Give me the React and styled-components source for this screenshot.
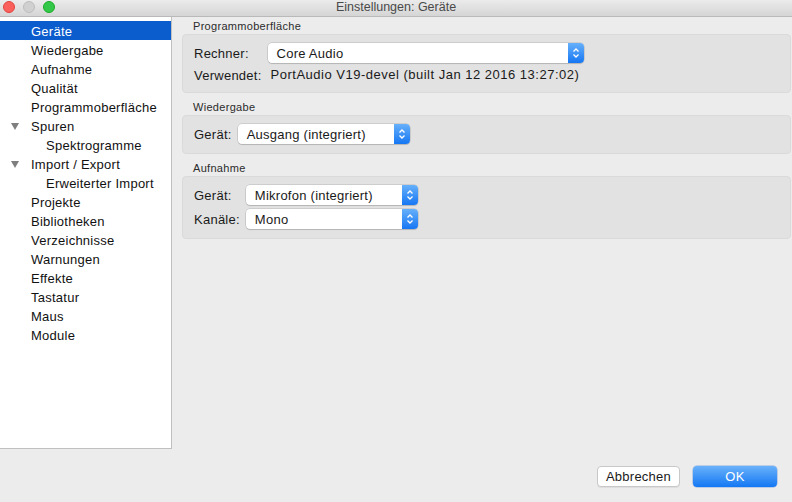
import styled, { createGlobalStyle } from "styled-components";

const GlobalStyle = createGlobalStyle`
  html, body {
    margin: 0;
    padding: 0;
    background: #ececec;
    overflow: hidden;
  }
  * {
    box-sizing: border-box;
  }
`;

const Window = styled.div`
  width: 792px;
  height: 502px;
  display: flex;
  flex-direction: column;
  background: #ececec;
  font-family: "Liberation Sans", Helvetica, Arial, sans-serif;
  font-size: 13px;
  letter-spacing: 0.25px;
  color: #1a1a1a;
`;

const TitleBar = styled.div`
  position: relative;
  height: 17px;
  flex-shrink: 0;
  display: flex;
  align-items: center;
  justify-content: center;
  background: linear-gradient(#ebebeb, #d5d5d5);
  border-bottom: 1px solid #b9b9b9;
`;

const Lights = styled.div`
  position: absolute;
  left: 3px;
  top: 1px;
  display: flex;
  gap: 8px;
`;

const Light = styled.span`
  width: 12px;
  height: 12px;
  border-radius: 50%;
  background: ${(p) => p.$color};
  border: 1px solid ${(p) => p.$edge};
`;

const Title = styled.div`
  font-size: 12.5px;
  letter-spacing: 0;
  color: #4a4a4a;
  margin-top: -2px;
`;

const Body = styled.div`
  height: 432px;
  flex-shrink: 0;
  display: flex;
`;

const Sidebar = styled.div`
  width: 172px;
  flex-shrink: 0;
  background: #fff;
  border-right: 1px solid #bfbfbf;
  border-bottom: 1px solid #bfbfbf;
  padding-top: 4px;
`;

const NavItem = styled.div`
  height: 19px;
  padding-top: 1px;
  display: flex;
  align-items: center;
  padding-left: ${(p) => (p.$child ? 46 : 31)}px;
  position: relative;
  background: ${(p) => (p.$selected ? "#0b5ccd" : "transparent")};
  color: ${(p) => (p.$selected ? "#fff" : "#111")};
`;

const Disclosure = styled.span`
  position: absolute;
  left: 11px;
  top: 7px;
  width: 0;
  height: 0;
  border-left: 4px solid transparent;
  border-right: 4px solid transparent;
  border-top: 7px solid #7f7f7f;
`;

const Main = styled.div`
  flex: 1;
  padding: 2px 1px 0 10px;
  display: flex;
  flex-direction: column;
`;

const GroupLabel = styled.div`
  height: 15px;
  line-height: 15px;
  font-size: 11px;
  letter-spacing: 0.3px;
  color: #2b2b2b;
  padding-left: 11px;
`;

const GroupBox = styled.div`
  background: #e2e2e2;
  border: 1px solid #dadada;
  border-radius: 4px;
  padding: 8px 11px 9px;
  margin-bottom: 7px;
  display: grid;
  grid-template-columns: auto 1fr;
  column-gap: 6px;
  row-gap: 4px;
  align-items: center;
`;

const FieldLabel = styled.div`
  white-space: nowrap;
`;

const InfoText = styled.div`
  height: 16px;
  line-height: 16px;
  padding-left: 3px;
  letter-spacing: 0.5px;
  white-space: nowrap;
`;

const SelectBox = styled.div`
  width: ${(p) => p.$width}px;
  height: 20px;
  display: flex;
  align-items: center;
  background: #fff;
  border-radius: 4px;
  box-shadow: 0 0 0 0.5px rgba(0, 0, 0, 0.18), 0 1px 1px rgba(0, 0, 0, 0.12);
  overflow: hidden;
`;

const SelectText = styled.span`
  flex: 1;
  padding-left: 9px;
  white-space: nowrap;
`;

const SelectArrow = styled.span`
  width: 16px;
  height: 100%;
  display: flex;
  align-items: center;
  justify-content: center;
  background: linear-gradient(#66b0fb, #1677f3);
`;

const Footer = styled.div`
  flex: 1;
  display: flex;
  justify-content: flex-end;
  align-items: flex-start;
  gap: 13px;
  padding: 17px 15px 0 0;
`;

const Button = styled.button`
  width: ${(p) => p.$width}px;
  height: 21px;
  border-radius: 4px;
  font-family: inherit;
  font-size: 13px;
  letter-spacing: 0.25px;
  padding: 0;
  border: ${(p) => (p.$primary ? "none" : "1px solid #c8c8c8")};
  background: ${(p) => (p.$primary ? "linear-gradient(#69b1fa, #1478f4)" : "#fff")};
  color: ${(p) => (p.$primary ? "#fff" : "#1a1a1a")};
  box-shadow: ${(p) => (p.$primary ? "0 0 0 0.5px rgba(0,80,200,0.4)" : "0 1px 0 rgba(0,0,0,0.06)")};
`;

const Chevrons = () => (
  <svg width="8" height="12" viewBox="0 0 8 12">
    <path d="M1.5 4.5 L4 2 L6.5 4.5 M1.5 7.5 L4 10 L6.5 7.5" fill="none" stroke="#fff" strokeWidth="1.3" />
  </svg>
);

const Select = ({ width, value }) => (
  <SelectBox $width={width}>
    <SelectText>{value}</SelectText>
    <SelectArrow>
      <Chevrons />
    </SelectArrow>
  </SelectBox>
);

const navItems = [
  { label: "Geräte", selected: true },
  { label: "Wiedergabe" },
  { label: "Aufnahme" },
  { label: "Qualität" },
  { label: "Programmoberfläche" },
  { label: "Spuren", open: true },
  { label: "Spektrogramme", child: true },
  { label: "Import / Export", open: true },
  { label: "Erweiterter Import", child: true },
  { label: "Projekte" },
  { label: "Bibliotheken" },
  { label: "Verzeichnisse" },
  { label: "Warnungen" },
  { label: "Effekte" },
  { label: "Tastatur" },
  { label: "Maus" },
  { label: "Module" },
];

export default function App() {
  return (
    <Window>
      <GlobalStyle />
      <TitleBar>
        <Lights>
          <Light $color="#fc605c" $edge="#e0443e" />
          <Light $color="#d0d0d0" $edge="#bdbdbd" />
          <Light $color="#34c84a" $edge="#1aab29" />
        </Lights>
        <Title>Einstellungen: Geräte</Title>
      </TitleBar>
      <Body>
        <Sidebar>
          {navItems.map((item) => (
            <NavItem key={item.label} $selected={item.selected} $child={item.child}>
              {item.open && <Disclosure />}
              {item.label}
            </NavItem>
          ))}
        </Sidebar>
        <Main>
          <GroupLabel>Programmoberfläche</GroupLabel>
          <GroupBox>
            <FieldLabel>Rechner:</FieldLabel>
            <Select width={316} value="Core Audio" />
            <FieldLabel>Verwendet:</FieldLabel>
            <InfoText>PortAudio V19-devel (built Jan 12 2016 13:27:02)</InfoText>
          </GroupBox>

          <GroupLabel>Wiedergabe</GroupLabel>
          <GroupBox>
            <FieldLabel>Gerät:</FieldLabel>
            <Select width={172} value="Ausgang (integriert)" />
          </GroupBox>

          <GroupLabel>Aufnahme</GroupLabel>
          <GroupBox>
            <FieldLabel>Gerät:</FieldLabel>
            <Select width={172} value="Mikrofon (integriert)" />
            <FieldLabel>Kanäle:</FieldLabel>
            <Select width={172} value="Mono" />
          </GroupBox>
        </Main>
      </Body>
      <Footer>
        <Button $width={83}>Abbrechen</Button>
        <Button $width={84} $primary>
          OK
        </Button>
      </Footer>
    </Window>
  );
}
